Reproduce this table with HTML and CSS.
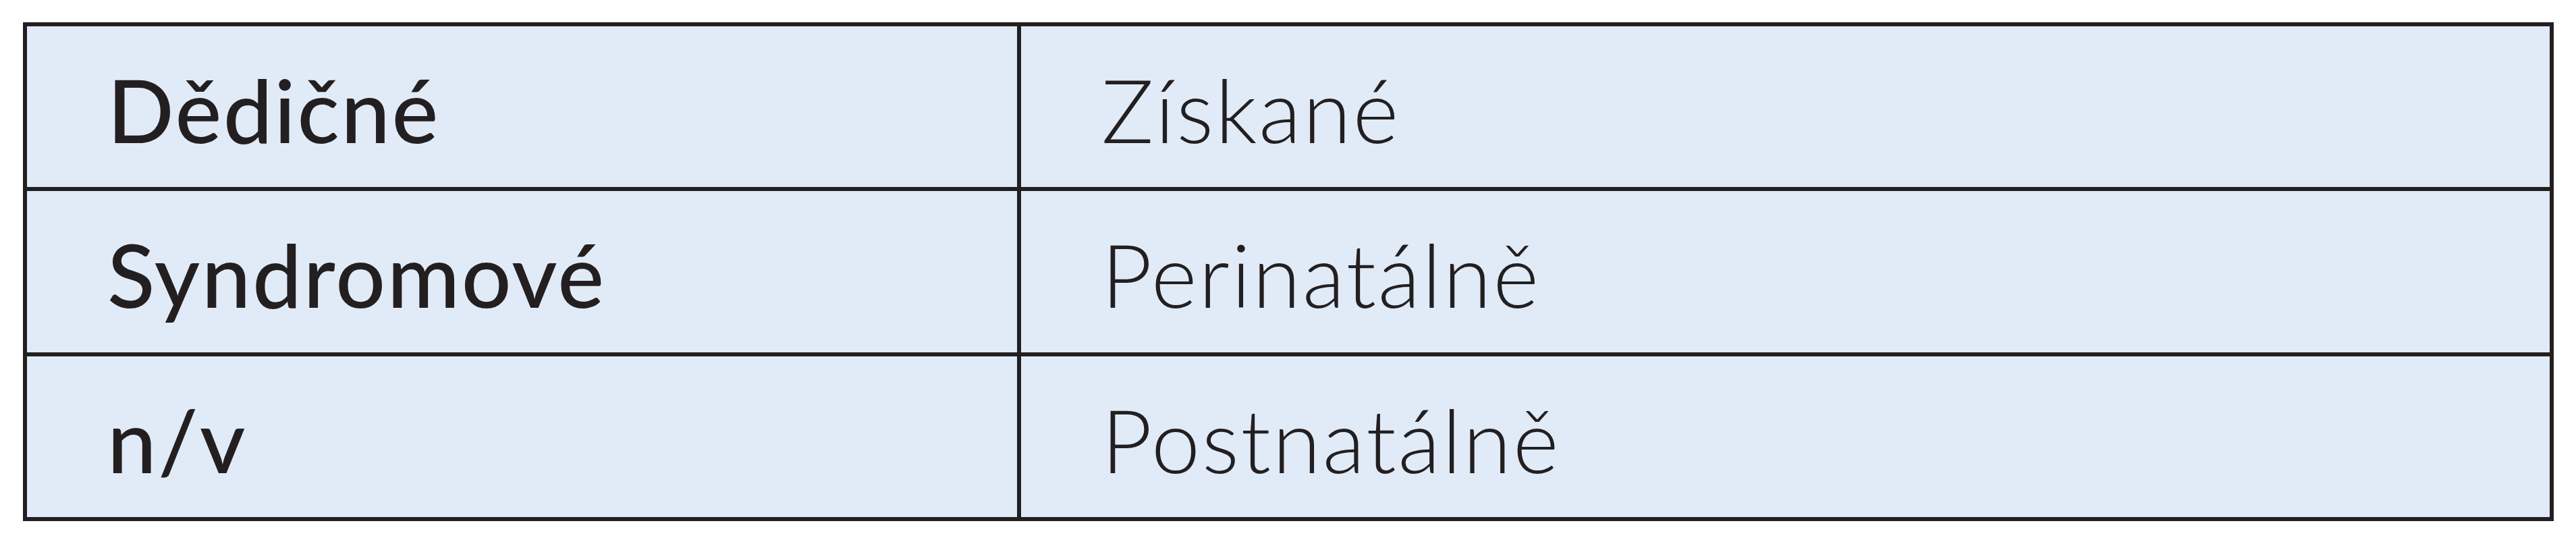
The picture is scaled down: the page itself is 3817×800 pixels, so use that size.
FILE: index.html
```html
<!DOCTYPE html>
<html lang="cs">
<head>
<meta charset="utf-8">
<title>Tabulka</title>
<link rel="stylesheet" href="styles.css">
</head>
<body>
<div class="table">
  <div class="cell key">Dědičné</div>
  <div class="cell val">Získané</div>
  <div class="cell key">Syndromové</div>
  <div class="cell val">Perinatálně</div>
  <div class="cell key">n/v</div>
  <div class="cell val">Postnatálně</div>
</div>
</body>
</html>
```
FILE: styles.css
```css
html, body {
  margin: 0;
  padding: 0;
  background: #ffffff;
}
body {
  padding: 33px 0 0 34px;
}
.table {
  box-sizing: border-box;
  width: 3750px;
  height: 739px;
  display: grid;
  grid-template-columns: 1467px 1fr;
  grid-template-rows: 1fr 1fr 1fr;
  column-gap: 6px;
  row-gap: 6px;
  padding: 6px;
  background: #231f20;
}
.cell {
  background: #e1ebf7;
  display: flex;
  align-items: center;
  padding: 8px 0 0 119px;
  font-family: "Lato", "Liberation Sans", sans-serif;
  font-size: 130px;
  color: #231f20;
  line-height: 1.2;
}
.key {
  font-weight: 500;
  letter-spacing: 2.5px;
}
.val {
  font-weight: 300;
  letter-spacing: 2.5px;
}
```
